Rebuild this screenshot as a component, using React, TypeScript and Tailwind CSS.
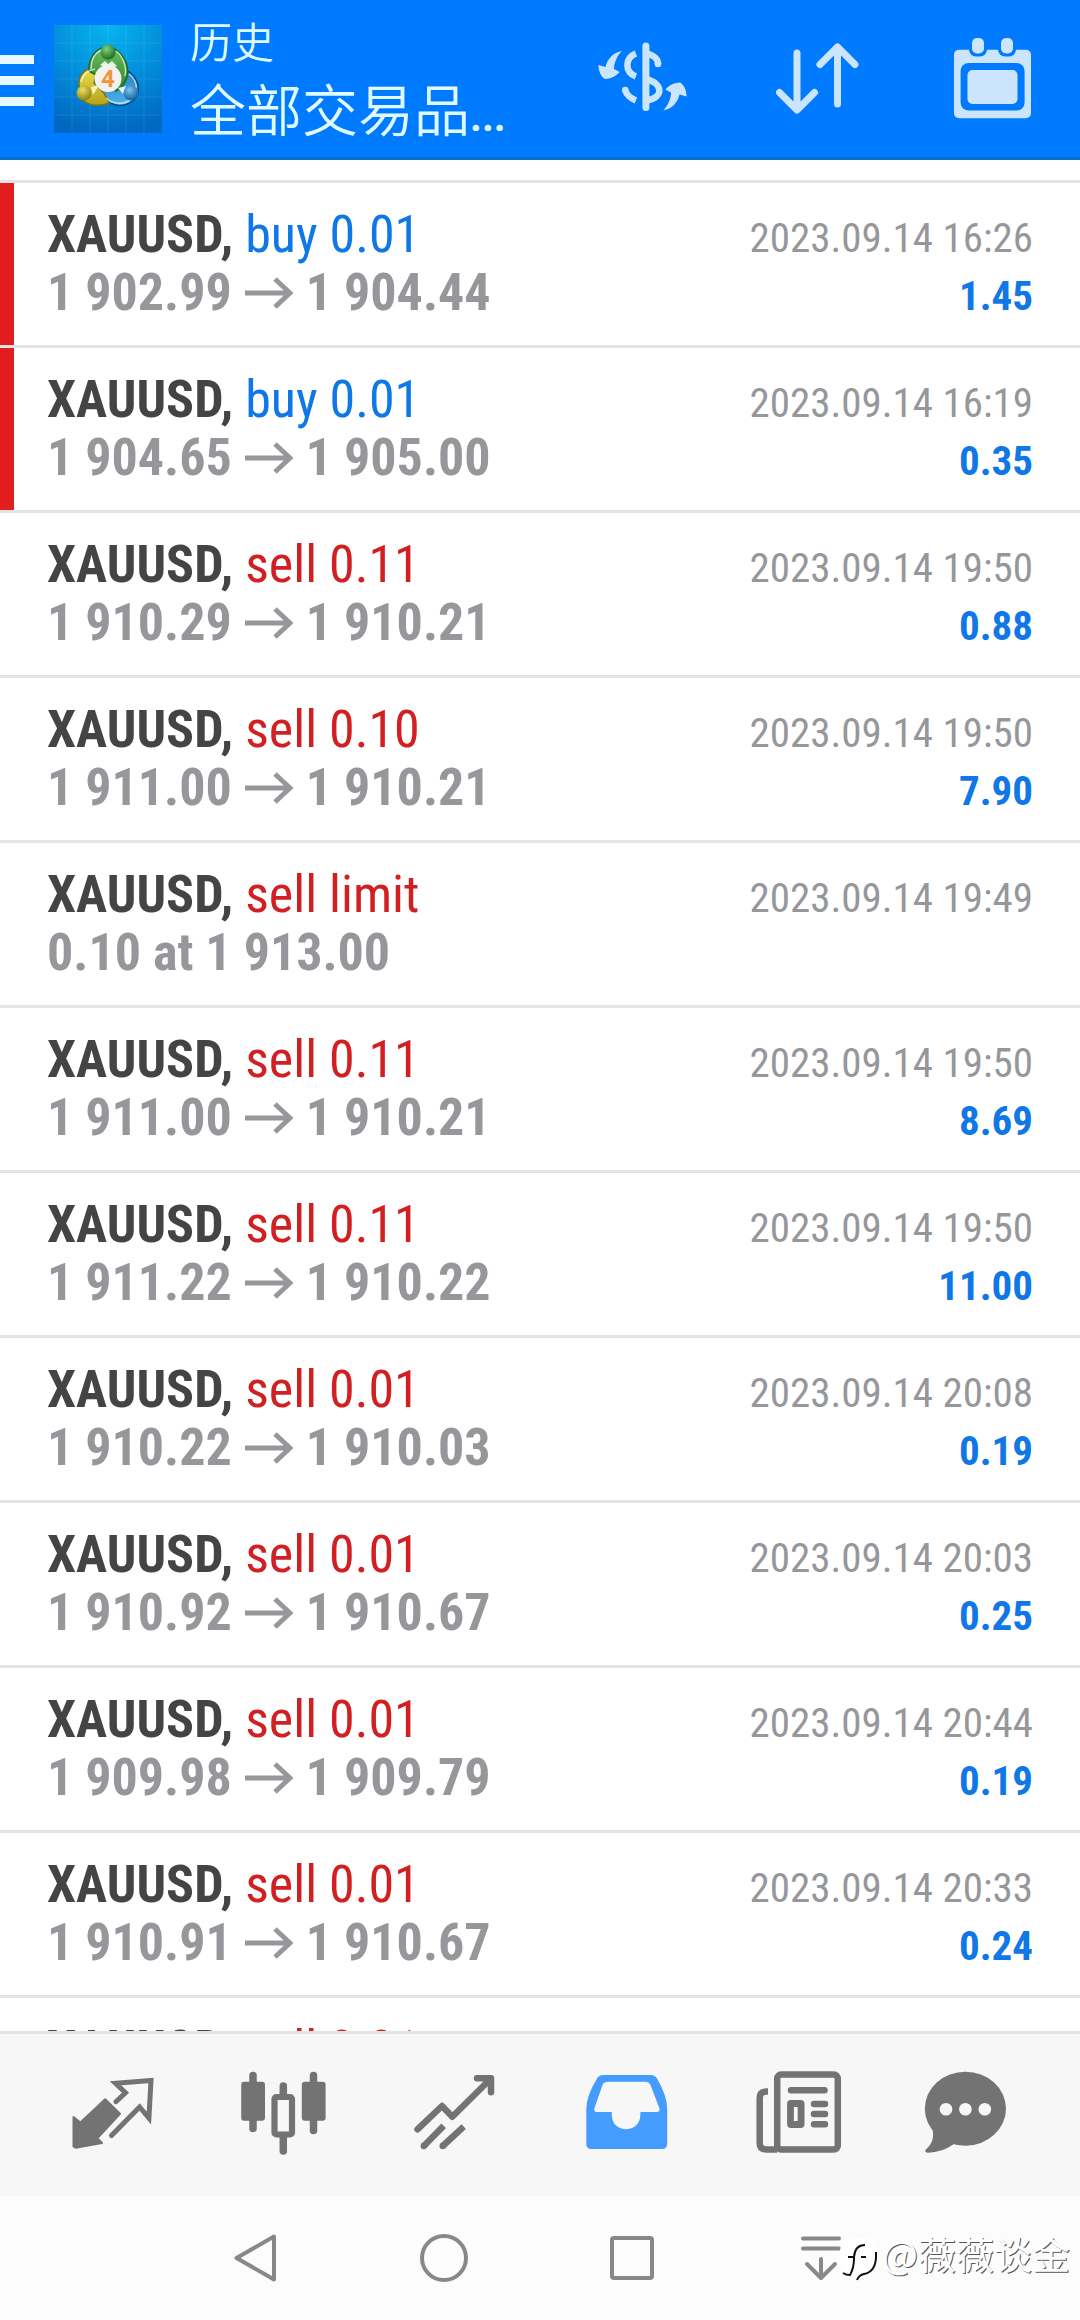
import type { ReactNode } from 'react';

type Deal = {
  side: 'buy' | 'sell';
  label: string;
  from?: string;
  to?: string;
  note?: string;
  time: string;
  profit?: string;
  flagged?: boolean;
};

const deals: Deal[] = [
  { side: 'buy', label: 'buy 0.01', from: '1 902.99', to: '1 904.44', time: '2023.09.14 16:26', profit: '1.45', flagged: true },
  { side: 'buy', label: 'buy 0.01', from: '1 904.65', to: '1 905.00', time: '2023.09.14 16:19', profit: '0.35', flagged: true },
  { side: 'sell', label: 'sell 0.11', from: '1 910.29', to: '1 910.21', time: '2023.09.14 19:50', profit: '0.88' },
  { side: 'sell', label: 'sell 0.10', from: '1 911.00', to: '1 910.21', time: '2023.09.14 19:50', profit: '7.90' },
  { side: 'sell', label: 'sell limit', note: '0.10 at 1 913.00', time: '2023.09.14 19:49' },
  { side: 'sell', label: 'sell 0.11', from: '1 911.00', to: '1 910.21', time: '2023.09.14 19:50', profit: '8.69' },
  { side: 'sell', label: 'sell 0.11', from: '1 911.22', to: '1 910.22', time: '2023.09.14 19:50', profit: '11.00' },
  { side: 'sell', label: 'sell 0.01', from: '1 910.22', to: '1 910.03', time: '2023.09.14 20:08', profit: '0.19' },
  { side: 'sell', label: 'sell 0.01', from: '1 910.92', to: '1 910.67', time: '2023.09.14 20:03', profit: '0.25' },
  { side: 'sell', label: 'sell 0.01', from: '1 909.98', to: '1 909.79', time: '2023.09.14 20:44', profit: '0.19' },
  { side: 'sell', label: 'sell 0.01', from: '1 910.91', to: '1 910.67', time: '2023.09.14 20:33', profit: '0.24' },
  { side: 'sell', label: 'sell 0.01', time: '' },
];

function Icon({ children }: { children: ReactNode }) {
  return (
    <svg viewBox="0 0 90 90" className="w-[90px] h-[90px]" fill="none" strokeLinecap="round" strokeLinejoin="round" aria-hidden="true">
      {children}
    </svg>
  );
}

function AppLogo() {
  return (
    <svg viewBox="0 0 108 108" className="w-[108px] h-[108px] shrink-0" fill="none" aria-hidden="true">
      <defs>
        <radialGradient id="sky" cx="50%" cy="0%" r="100%">
          <stop offset="0" stopColor="#06b5ee" />
          <stop offset="0.5" stopColor="#0290dc" />
          <stop offset="1" stopColor="#0068c0" />
        </radialGradient>
        <linearGradient id="green" x1="0" y1="0" x2="0" y2="1">
          <stop offset="0" stopColor="#6fbd62" />
          <stop offset="1" stopColor="#23862a" />
        </linearGradient>
        <linearGradient id="gold" x1="0" y1="0" x2="0" y2="1">
          <stop offset="0" stopColor="#ece04a" />
          <stop offset="1" stopColor="#b3a21c" />
        </linearGradient>
        <linearGradient id="blue" x1="0" y1="0" x2="0" y2="1">
          <stop offset="0" stopColor="#2d7fc0" />
          <stop offset="1" stopColor="#4cb4ea" />
        </linearGradient>
        <radialGradient id="greenBall" cx="40%" cy="30%" r="70%">
          <stop offset="0" stopColor="#7fd07a" />
          <stop offset="1" stopColor="#1b6e26" />
        </radialGradient>
        <radialGradient id="goldBall" cx="40%" cy="30%" r="70%">
          <stop offset="0" stopColor="#eee25c" />
          <stop offset="1" stopColor="#8d8212" />
        </radialGradient>
        <radialGradient id="blueBall" cx="40%" cy="30%" r="70%">
          <stop offset="0" stopColor="#79c4ee" />
          <stop offset="1" stopColor="#125f9f" />
        </radialGradient>
      </defs>
      <rect width="108" height="108" fill="url(#sky)" />
      <path d="M18 0V108M36 0V108M54 0V108M72 0V108M90 0V108M0 18H108M0 36H108M0 54H108M0 72H108M0 90H108" stroke="#fff" strokeOpacity="0.05" strokeWidth="2" />
      {/* three linked figures */}
      <path d="M70 44C80 48 86 58 84 68C81 78 70 82 62 80C54 78 48 72 46 66L62 60Z" fill="url(#blue)" stroke="#0c4c86" strokeWidth="1.5" />
      <path d="M44 42C32 42 24 50 25 60L28 74C34 81 46 82 55 78L50 68L40 58Z" fill="url(#gold)" stroke="#7d7312" strokeWidth="1.5" />
      <path d="M35 46C34 34 42 22 54 22C68 24 76 40 73 52C71 59 68 63 62 66L60 52L54 42L42 50Z" fill="url(#green)" stroke="#1d6b25" strokeWidth="1.5" />
      <path d="M37 44C37 35 41 28 47 25M62 26C69 31 73 42 71 51M27 57C29 49 35 45 41 44M52 73C58 79 70 81 78 73M75 49C80 53 83 59 82 64" stroke="#fff" strokeOpacity="0.65" strokeWidth="1.5" />
      <path d="M46 40L51 36L54 39L58 36L63 41L54 44Z" fill="#e9f6e4" />
      <path d="M37 62L45 60L39 70Z" fill="#f6f2b4" />
      <path d="M64 63L72 61L69 69Z" fill="#dff1fc" />
      <circle cx="54" cy="27" r="7.5" fill="url(#greenBall)" />
      <circle cx="30" cy="68" r="7.5" fill="url(#goldBall)" />
      <circle cx="77" cy="68" r="7.5" fill="url(#blueBall)" />
      <circle cx="54" cy="53.5" r="13.5" fill="#f4f2f0" />
      <text x="54" y="62" textAnchor="middle" fontFamily="Roboto, sans-serif" fontSize="24" fontWeight="700" fill="#f0963c">4</text>
    </svg>
  );
}

function CurrencyIcon() {
  const arrow = 'M23.8 16C14 18 9 25 7.5 32L0.4 30C0.5 36 3 42 7 44C13 44 18 41 21.7 37L16 34C16 28 19 21 23.8 16Z';
  return (
    <Icon>
      <g fill="#cce5ff">
        <path d={arrow} />
        <path d={arrow} transform="rotate(180 44.5 45.7)" />
      </g>
      <path d="M47.9 11V72.5" stroke="#cce5ff" strokeWidth="7" />
      <path d="M37.9 18.5C26.5 23 26.5 37 37.9 41.5M37.9 65.5C32 63 28.5 60 27.2 55M49 18.5C56 20.5 60 24 60 29M49 44.5C66 49 65 63 49 65.5" stroke="#cce5ff" strokeWidth="6.5" strokeLinecap="butt" />
      <circle cx="27.2" cy="55" r="3.3" fill="#cce5ff" />
      <circle cx="60" cy="29" r="3.3" fill="#cce5ff" />
    </Icon>
  );
}

function SortIcon() {
  return (
    <Icon>
      <path d="M24 18V74M6.5 57.5L24 75L41.5 57.5M64.5 69V12M47 29.5L64.5 12L82 29.5" stroke="#cce5ff" strokeWidth="7" />
    </Icon>
  );
}

function CalendarIcon() {
  return (
    <Icon>
      <rect x="6" y="14.7" width="77" height="68.5" rx="5" fill="#cce5ff" />
      <rect x="12.6" y="28" width="64" height="47.5" rx="8" fill="#007aff" />
      <rect x="19.5" y="35" width="50" height="34" rx="5" fill="#cce5ff" />
      <rect x="21" y="0" width="18" height="21.5" rx="7" fill="#007aff" />
      <rect x="50" y="0" width="18" height="21.5" rx="7" fill="#007aff" />
      <rect x="24" y="3" width="12" height="15.5" rx="5" fill="#cce5ff" />
      <rect x="53" y="3" width="12" height="15.5" rx="5" fill="#cce5ff" />
    </Icon>
  );
}

function QuotesIcon() {
  return (
    <Icon>
      <path d="M5.5 47L12.4 52.5L37.2 29.3L52 43.7L29.3 68.3L34 73L7.6 77.7L5.5 76.5Z" fill="#737373" stroke="#737373" strokeWidth="2" />
      <path d="M47.9 31.7L57.5 22.7L47.5 13.3L83 10.5L80.9 48L71.6 37L43.5 65.5" stroke="#737373" strokeWidth="5" strokeLinejoin="miter" />
    </Icon>
  );
}

function ChartIcon() {
  return (
    <Icon>
      <path d="M14 5.5V58.5M74.5 5.5V60.5M44.3 16V28M44.3 66V81" stroke="#737373" strokeWidth="7.5" />
      <rect x="2.2" y="11.7" width="23.8" height="39" rx="3" fill="#737373" />
      <rect x="62.8" y="11.7" width="23.8" height="39" rx="3" fill="#737373" />
      <rect x="35.5" y="27" width="17.5" height="37.5" rx="2" fill="#f7f7f7" stroke="#737373" strokeWidth="6.2" />
    </Icon>
  );
}

function TradeIcon() {
  return (
    <Icon>
      <path d="M7.5 59.3L32 36L42.3 46.7L80 9.5M67 8.3H81V22.3" stroke="#737373" strokeWidth="6.5" />
      <path d="M33.7 55.7L13.8 76M53.7 56.7L32.7 76" stroke="#737373" strokeWidth="6.5" strokeLinecap="butt" />
      <circle cx="13.8" cy="76" r="3.2" fill="#737373" />
      <circle cx="32.7" cy="76" r="3.2" fill="#737373" />
    </Icon>
  );
}

function HistoryIcon() {
  return (
    <Icon>
      <path
        fillRule="evenodd"
        fill="#449cff"
        d="M22 5H70Q74 5 76 8.5Q86.2 26 86.2 39V74Q86.2 79 81 79H10.5Q5.3 79 5.3 74V39Q5.3 26 16 8.5Q18 5 22 5ZM27 11.7Q23 11.7 21.5 15L13.5 38Q12.5 42 16 42H30.8V45C31 64 59 64 59.4 45V42H75.5Q79.5 42 78.3 38L69.5 15Q68 11.7 64 11.7Z"
      />
    </Icon>
  );
}

function NewsIcon() {
  return (
    <Icon>
      <rect x="25.2" y="4.6" width="60.6" height="75" rx="4" stroke="#737373" strokeWidth="6.5" />
      <path d="M16 21.6H14.5Q7.7 21.6 7.7 28V73Q7.7 79.5 14.5 79.5H25" stroke="#737373" strokeWidth="6.5" strokeLinecap="butt" />
      <path d="M39 20.3H72.5M62 34H73M62 44H73M62 54.2H73" stroke="#737373" strokeWidth="6.5" />
      <rect x="38.5" y="33.5" width="10.6" height="21" rx="0.5" stroke="#737373" strokeWidth="6.8" />
    </Icon>
  );
}

function ChatIcon() {
  return (
    <Icon>
      <ellipse cx="42.4" cy="38.7" rx="40.6" ry="37" fill="#737373" />
      <path d="M9 57Q13 71 2.8 79.5Q1 82.5 5 82.7Q19 82.5 31 74Z" fill="#737373" />
      <circle cx="23" cy="39.3" r="6.3" fill="#f7f7f7" />
      <circle cx="42.4" cy="39.3" r="6.3" fill="#f7f7f7" />
      <circle cx="61.8" cy="39.3" r="6.3" fill="#f7f7f7" />
    </Icon>
  );
}

function DealRow({ deal }: { deal: Deal }) {
  const sideColor = deal.side === 'buy' ? 'text-[#0f78e6]' : 'text-[#d11f22]';

  return (
    <li className="flex h-[165px] shrink-0 border-b-[3px] border-[#e4e4e4]">
      <div className={deal.flagged ? 'w-[14px] bg-[#e21d1d]' : 'w-[14px]'} />
      <div className="flex-1 pt-[23px] pl-[33px] pr-[47px]">
        <div className="flex items-baseline justify-between">
          <p className="text-[52px] leading-[58px] whitespace-pre">
            <span className="font-bold text-[#444444]">XAUUSD, </span>
            <span className={sideColor}>{deal.label}</span>
          </p>
          <time className="text-[41px] leading-none text-[#96979b]">{deal.time}</time>
        </div>
        <div className="flex items-baseline justify-between font-bold">
          <p className="flex items-center gap-[13px] text-[52px] leading-[58px] text-[#96979b]">
            {deal.note ?? deal.from}
            {deal.to && (
              <>
                <svg viewBox="0 0 48 32" className="w-12 h-8" fill="none" stroke="#96979b" strokeWidth="5" role="img" aria-label="to">
                  <path d="M0 16H44M30 2L45 16L30 30" />
                </svg>
                {deal.to}
              </>
            )}
          </p>
          <p className="text-[41px] leading-none text-[#0f78e6]">{deal.profit}</p>
        </div>
      </div>
    </li>
  );
}

const tabs = [
  { name: 'Quotes', icon: <QuotesIcon /> },
  { name: 'Chart', icon: <ChartIcon /> },
  { name: 'Trade', icon: <TradeIcon /> },
  { name: 'History', icon: <HistoryIcon /> },
  { name: 'News', icon: <NewsIcon /> },
  { name: 'Messages', icon: <ChatIcon /> },
];

const actions = [
  { name: 'Symbols', icon: <CurrencyIcon /> },
  { name: 'Sort', icon: <SortIcon /> },
  { name: 'Period', icon: <CalendarIcon /> },
];

const systemKeys = [
  { name: 'Back', icon: <path d="M63 23.5L25.5 45L63 66.5Z" /> },
  { name: 'Home', icon: <circle cx="44" cy="45" r="22" /> },
  { name: 'Recent', icon: <rect x="24" y="25" width="40" height="40" rx="2" /> },
  { name: 'Hide', icon: <path d="M26 25.5H62M26 35.5H62M44 46V64M30 51L44 65L58 51" /> },
];

export default function App() {
  return (
    <div className="relative flex flex-col h-screen overflow-hidden bg-white font-['Roboto_Condensed','Liberation_Sans_Narrow',Roboto,'Noto_Sans_CJK_SC',sans-serif]">
      <header className="flex items-center h-[160px] shrink-0 bg-[#007aff] border-b-[3px] border-[#0c6cd6] text-[#dffbff]">
        <button aria-label="Menu" className="flex flex-col gap-3 w-[54px] pt-1">
          <span className="w-[34px] h-[9px] bg-[#e8f8ff]" />
          <span className="w-[34px] h-[9px] bg-[#e8f8ff]" />
          <span className="w-[34px] h-[9px] bg-[#e8f8ff]" />
        </button>
        <AppLogo />
        <div className="flex-1 min-w-0 pl-7 pt-1.5 font-['Noto_Sans_CJK_SC',sans-serif] font-[350]">
          <h1 className="text-[42px] leading-[60px]">历史</h1>
          <p className="text-[56px] leading-[74px] whitespace-nowrap">
            全部交易品<span className="font-['Roboto_Condensed',sans-serif] text-[41px] font-bold">...</span>
          </p>
        </div>
        {actions.map((action) => (
          <button key={action.name} aria-label={action.name} className="flex justify-center w-[175px] pt-0.5">
            {action.icon}
          </button>
        ))}
      </header>

      <main className="flex-1 min-h-0 overflow-hidden pt-5">
        <ul className="flex flex-col border-t-[3px] border-[#e4e4e4]">
          {deals.map((deal, i) => (
            <DealRow key={i} deal={deal} />
          ))}
        </ul>
      </main>

      <nav className="flex items-center h-[165px] shrink-0 px-[27px] bg-[#f7f7f7] border-t-[3px] border-[#e4e4e4]">
        {tabs.map((tab) => (
          <button key={tab.name} aria-label={tab.name} className="flex flex-1 justify-center">
            {tab.icon}
          </button>
        ))}
      </nav>

      <footer className="flex items-center h-[124px] shrink-0 pl-[162px] pr-[164px] bg-[#fcfcfc]">
        {systemKeys.map((key) => (
          <button key={key.name} aria-label={key.name} className="flex flex-1 justify-center">
            <svg viewBox="0 0 90 90" className="w-[90px] h-[90px]" fill="none" stroke="#888888" strokeWidth="4" strokeLinecap="round" strokeLinejoin="round" aria-hidden="true">
              {key.icon}
            </svg>
          </button>
        ))}
      </footer>

      {/* author watermark */}
      <div className="absolute right-[10px] bottom-8 flex items-center gap-1 text-white">
        <svg viewBox="0 0 38 46" className="w-[38px] h-[46px]" aria-hidden="true">
          <path d="M12 2H24Q37 2 37 17Q37 36 23 39L17 45L19 38H9Q0 36 0 26V14Q2 3 12 2Z" fill="#fff" />
          <path d="M8 21H14Q15 9 25 9M21 21H26M36 16V22Q35 36 24 38Q19 39 17 44M14 22Q14 32 10 39Q6 39 3 37" fill="none" stroke="#111" strokeWidth="2" />
        </svg>
        <span className="font-['Noto_Sans_CJK_SC',sans-serif] text-[38px] leading-[46px] pb-3 [text-shadow:1px_1px_0_#555]">@薇薇谈金</span>
      </div>
    </div>
  );
}
